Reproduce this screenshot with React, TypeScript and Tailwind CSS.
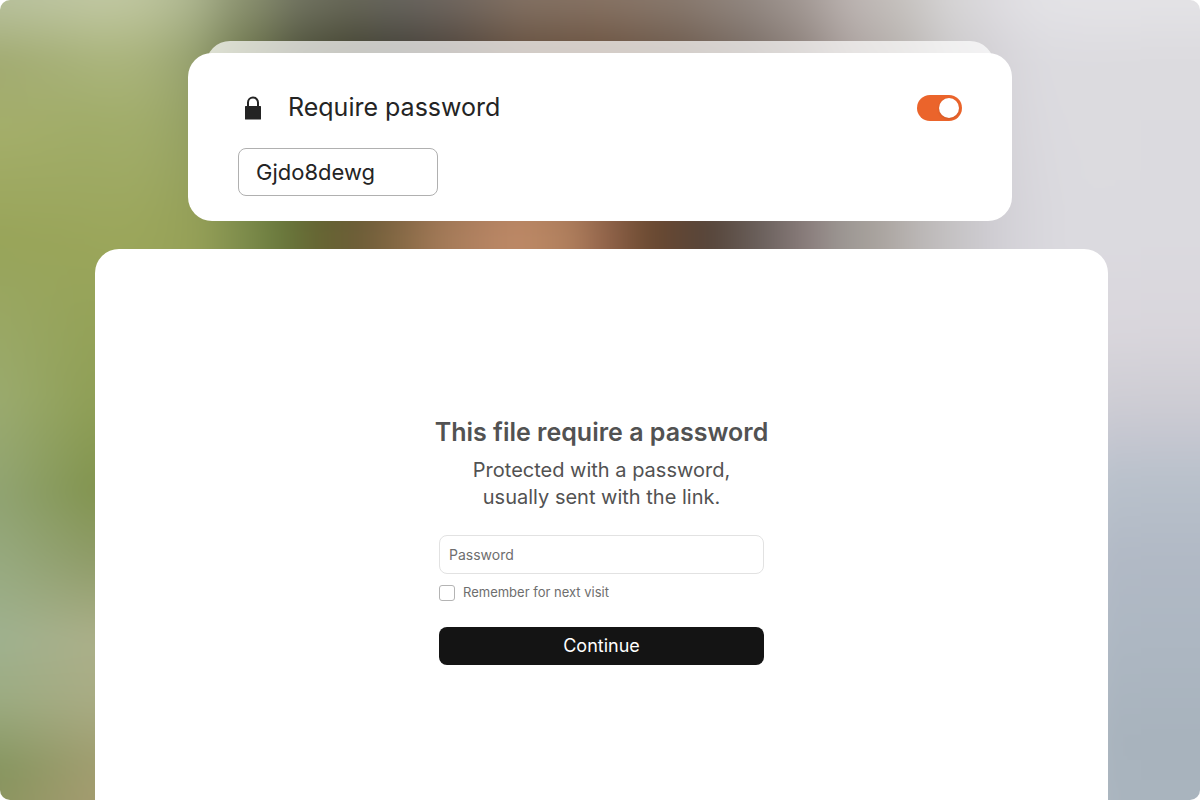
import { useState } from "react";

type Stop = [number, string];

const topTones: Stop[] = [
  [130, "#a8b17c"],
  [190, "#8f9a6a"],
  [250, "#6c744b"],
  [300, "#4d5039"],
  [350, "#42422f"],
  [400, "#413e36"],
  [450, "#4c4138"],
  [520, "#634d3c"],
  [600, "#69503d"],
  [680, "#6b584a"],
  [750, "#776a62"],
  [800, "#8b7f79"],
  [850, "#aaa09d"],
  [900, "#b7b2ae"],
  [950, "#cbc9ca"],
  [1000, "#d5d3d8"],
  [1050, "#dcdbe0"],
];

const middleTones: Stop[] = [
  [130, "#9ba65b"],
  [200, "#929d56"],
  [250, "#7b8a4a"],
  [280, "#6a7a3d"],
  [320, "#656432"],
  [360, "#6e5d38"],
  [400, "#866945"],
  [440, "#a27957"],
  [490, "#b68463"],
  [520, "#bd8966"],
  [570, "#b07f5d"],
  [610, "#8e6148"],
  [650, "#6b4a31"],
  [680, "#604635"],
  [710, "#56453a"],
  [760, "#6a605c"],
  [810, "#8c7f7e"],
  [840, "#9b9692"],
  [880, "#aaa49f"],
  [920, "#bbb7b6"],
  [960, "#c7c5c7"],
  [1000, "#d1cfd5"],
  [1070, "#dbdadf"],
];

const leftEdge: Stop[] = [
  [0, "#a6b184"],
  [60, "#a2ab72"],
  [130, "#a4ae6a"],
  [240, "#98a459"],
  [400, "#9aaa6e"],
  [500, "#90a372"],
  [640, "#9fb18f"],
  [700, "#9cab81"],
  [770, "#86955f"],
  [800, "#8c9560"],
];

const leftInner: Stop[] = [
  [0, "#b0b98a"],
  [60, "#aab47c"],
  [120, "#a1ad6a"],
  [240, "#9ba65b"],
  [400, "#8f9f56"],
  [490, "#82944f"],
  [560, "#8f9c68"],
  [640, "#acb08a"],
  [700, "#a9ac84"],
  [760, "#a09e70"],
  [800, "#a49c70"],
];

const rightEdge: Stop[] = [
  [0, "#dddce0"],
  [60, "#dcdbdf"],
  [240, "#dbdadf"],
  [330, "#d9d6dc"],
  [400, "#cecdd4"],
  [440, "#c4c6d0"],
  [480, "#b9c1cb"],
  [560, "#b1b9c5"],
  [640, "#adb7c2"],
  [740, "#a8b3bd"],
  [800, "#a9b4be"],
];

// The canvas runs 40 units past each side so the blur never reaches an edge
const canvas = { x: -40, y: -40, width: 1280, height: 880 };

function Tones({ id, stops, vertical }: { id: string; stops: Stop[]; vertical?: boolean }) {
  return (
    <linearGradient id={id} gradientUnits="userSpaceOnUse" x1="0" y1="0" x2={vertical ? 0 : 1200} y2={vertical ? 800 : 0}>
      {stops.map(([at, color]) => (
        <stop key={at} offset={at / (vertical ? 800 : 1200)} stopColor={color} />
      ))}
    </linearGradient>
  );
}

function Fade({ id, from, to, vertical }: { id: string; from: number; to: number; vertical?: boolean }) {
  return (
    <>
      <linearGradient
        id={`${id}-ramp`}
        gradientUnits="userSpaceOnUse"
        x1={vertical ? 0 : from}
        y1={vertical ? from : 0}
        x2={vertical ? 0 : to}
        y2={vertical ? to : 0}
      >
        <stop offset="0" stopColor="#fff" />
        <stop offset="1" stopColor="#000" />
      </linearGradient>
      <mask id={id} maskUnits="userSpaceOnUse" {...canvas}>
        <rect {...canvas} fill={`url(#${id}-ramp)`} />
      </mask>
    </>
  );
}

// Out-of-focus photo behind the cards
function Backdrop() {
  return (
    <svg
      className="absolute -inset-10 h-[calc(100%+80px)] w-[calc(100%+80px)] blur-md"
      viewBox="-40 -40 1280 880"
      preserveAspectRatio="none"
      aria-hidden="true"
    >
      <defs>
        <Tones id="top" stops={topTones} />
        <Tones id="middle" stops={middleTones} />
        <Tones id="left-edge" stops={leftEdge} vertical />
        <Tones id="left-inner" stops={leftInner} vertical />
        <Tones id="right" stops={rightEdge} vertical />
        <Fade id="fade-top" from={60} to={225} vertical />
        <Fade id="fade-inner" from={100} to={230} />
        <Fade id="fade-edge" from={0} to={95} />
        <Fade id="fade-right" from={1110} to={990} />
        <linearGradient id="glow" gradientUnits="userSpaceOnUse" x1="0" y1="0" x2="0" y2="60">
          <stop offset="0" stopColor="#fff" stopOpacity="0.2" />
          <stop offset="1" stopColor="#fff" stopOpacity="0" />
        </linearGradient>
      </defs>
      <rect {...canvas} fill="url(#middle)" />
      <rect {...canvas} fill="url(#top)" mask="url(#fade-top)" />
      <rect {...canvas} fill="url(#left-inner)" mask="url(#fade-inner)" />
      <rect {...canvas} fill="url(#left-edge)" mask="url(#fade-edge)" />
      <rect {...canvas} fill="url(#right)" mask="url(#fade-right)" />
      <rect {...canvas} fill="url(#glow)" />
    </svg>
  );
}

function LockIcon() {
  return (
    <svg className="h-6 w-4" viewBox="0 0 16 24" aria-hidden="true">
      <path d="M3 11V6.5a5 5 0 0 1 10 0V11" fill="none" stroke="#242424" strokeWidth="2" />
      <rect y="10" width="16" height="13.5" rx="0.5" fill="#242424" />
    </svg>
  );
}

function PasswordSettings() {
  const [required, setRequired] = useState(true);
  const [password, setPassword] = useState("Gjdo8dewg");

  return (
    <section className="mx-auto w-full max-w-[824px]">
      <div className="mx-[18px] h-6 rounded-t-3xl bg-white/70" />
      <div className="relative -mt-3 rounded-3xl bg-white px-[50px] pt-9 pb-[25px]">
        <div className="flex h-[38px] items-center">
          <span className="ml-[7px] flex">
            <LockIcon />
          </span>
          <label htmlFor="require-password" className="ml-[27px] text-[25px] text-[#242424]">
            Require password
          </label>
          <input
            id="require-password"
            type="checkbox"
            role="switch"
            checked={required}
            onChange={(e) => setRequired(e.target.checked)}
            className="ml-auto h-[26px] w-[45px] cursor-pointer appearance-none rounded-full bg-gray-300 p-[3px] before:block before:size-5 before:rounded-full before:bg-white before:shadow-sm checked:bg-[#eb642b] checked:before:ml-auto"
          />
        </div>
        <input
          type="text"
          aria-label="File password"
          value={password}
          onChange={(e) => setPassword(e.target.value)}
          className="mt-[21px] block h-12 w-[200px] rounded-lg border border-[#b0b0b0] px-[17px] text-[22px] text-[#242424]"
        />
      </div>
    </section>
  );
}

function UnlockForm() {
  return (
    <main className="mt-7 mr-[92px] ml-[95px] flex-1 rounded-t-3xl bg-white pt-[166px] pb-20">
      <div className="text-center text-[#525252]">
        <h1 className="text-[25px] leading-[34px] font-semibold">This file require a password</h1>
        <p className="mt-2 text-xl leading-[27px]">
          Protected with a password,
          <br />
          usually sent with the link.
        </p>
      </div>
      <form className="mx-auto mt-6 w-[325px]" onSubmit={(e) => e.preventDefault()}>
        <input
          type="password"
          aria-label="Password"
          placeholder="Password"
          className="block h-[39px] w-full rounded-lg border border-[#e2e2e2] px-[9px] text-sm text-[#525252] placeholder:text-[#6e6e6e]"
        />
        <label className="mt-[9px] flex h-5 items-center gap-2 text-[13px] text-[#6e6e6e]">
          <input
            type="checkbox"
            className="size-4 appearance-none rounded-[3px] border border-[#b4b4b4] checked:bg-[#141414]"
          />
          Remember for next visit
        </label>
        <button type="submit" className="mt-6 h-[38px] w-full rounded-lg bg-[#141414] text-lg text-white">
          Continue
        </button>
      </form>
    </main>
  );
}

export default function App() {
  return (
    <div className="relative min-h-screen overflow-hidden rounded-[10px] font-['Inter',sans-serif]">
      <Backdrop />
      <div className="relative flex min-h-screen flex-col pt-[41px]">
        <PasswordSettings />
        <UnlockForm />
      </div>
    </div>
  );
}
